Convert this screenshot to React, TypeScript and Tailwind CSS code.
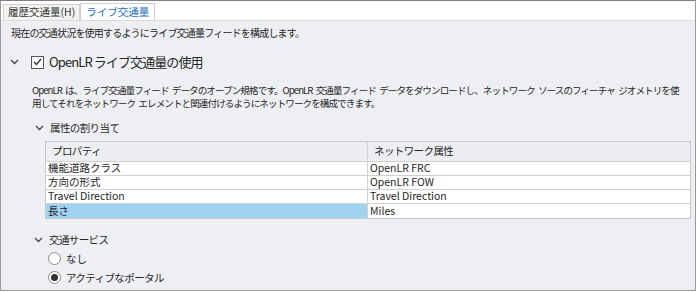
const jp = "font-['Noto_Sans_CJK_JP','Noto_Sans',sans-serif]";

const rows = [
  { prop: "機能道路クラス", attr: "OpenLR FRC" },
  { prop: "方向の形式", attr: "OpenLR FOW" },
  { prop: "Travel Direction", attr: "Travel Direction" },
  { prop: "長さ", attr: "Miles", selected: true },
];

const Chevron = ({ className = "" }: { className?: string }) => (
  <svg width="9" height="6" viewBox="0 0 9 6" className={className}>
    <path d="M1 1 L4.5 4.5 L8 1" fill="none" stroke="#444" strokeWidth="1.3" />
  </svg>
);

const Radio = ({ checked }: { checked?: boolean }) => (
  <span className="flex h-[13px] w-[13px] items-center justify-center rounded-full border border-[#8a8a8a] bg-white">
    {checked && <span className="h-[7px] w-[7px] rounded-full bg-[#333]" />}
  </span>
);

export default function App() {
  return (
    <div className={`h-[292px] w-[697px] bg-white ${jp} text-[#262626]`}>
      <div className="flex h-[291px] w-[696px] flex-col border border-[#9a9a9a] border-t-[#808080]">
        <div className="flex h-[20px] items-end border-b border-[#d9d9d9] bg-white pl-[2px]">
          <div className="flex h-[16px] items-center border border-b-0 border-[#cfcfcf] bg-[#f3f3f3] px-[4px] text-[10.5px] leading-none text-[#333]">
            履歴交通量(H)
          </div>
          <div className="flex h-[17px] items-center border border-b-0 border-[#cfcfcf] bg-white px-[5px] text-[10.5px] leading-none text-[#1a6fc0]">
            ライブ交通量
          </div>
        </div>

        <div className="flex flex-1 flex-col bg-[#eeeff2] pr-[3px]">
          <p className="pl-[10px] pt-[5px] text-[10px] leading-[14px] tracking-[-0.8px]">
            現在の交通状況を使用するようにライブ交通量フィードを構成します。
          </p>

          <div className="mt-[14px] flex items-center pl-[9px]">
            <Chevron />
            <span className="ml-[12px] flex h-[13px] w-[13px] items-center justify-center border border-[#555] bg-white">
              <svg width="9" height="8" viewBox="0 0 9 8">
                <path d="M1 4 L3.5 6.5 L8 1" fill="none" stroke="#333" strokeWidth="1.3" />
              </svg>
            </span>
            <span className="ml-[5px] text-[13px] leading-[16px] tracking-[-0.9px]">OpenLR ライブ交通量の使用</span>
          </div>

          <p className="mt-[14px] whitespace-nowrap pl-[31px] text-[9.6px] leading-[13px] tracking-[-0.95px] [word-spacing:2px]">
            OpenLR は、ライブ交通量フィード データのオープン規格です。OpenLR 交通量フィード データをダウンロードし、ネットワーク ソースのフィーチャ ジオメトリを使
            <br />
            用してそれをネットワーク エレメントと関連付けるようにネットワークを構成できます。
          </p>

          <div className="mt-[11px] flex items-center pl-[34px]">
            <Chevron />
            <span className="ml-[6px] text-[10.5px] leading-[14px] tracking-[-0.6px]">属性の割り当て</span>
          </div>

          <div className="ml-[44px] mr-[1px] mt-[6px] border border-[#c8c8c8] bg-white text-[10.5px] leading-none">
            <div className="grid h-[20px] grid-cols-[322px_1fr] bg-[#eceef1]">
              <div className="flex items-center border-r border-b border-[#d0d0d0] pl-[6px] tracking-[-0.6px]">プロパティ</div>
              <div className="flex items-center border-b border-[#d0d0d0] pl-[6px] tracking-[-0.6px]">ネットワーク属性</div>
            </div>
            {rows.map((r, i) => (
              <div
                key={r.prop}
                className={`grid h-[14px] grid-cols-[322px_1fr] ${i < rows.length - 1 ? "border-b border-[#d0d0d0]" : ""}`}
              >
                <div className={`flex items-center border-r border-[#d0d0d0] pl-[2px] ${r.selected ? "bg-[#9fd3f0]" : ""}`}>
                  {r.prop}
                </div>
                <div className="flex items-center pl-[2px]">{r.attr}</div>
              </div>
            ))}
          </div>

          <div className="mt-[14px] flex items-center pl-[33px]">
            <Chevron />
            <span className="ml-[6px] text-[10.5px] leading-[14px] tracking-[-0.6px]">交通サービス</span>
          </div>

          <div className="mt-[5px] flex flex-col gap-[6px] pl-[47px] text-[10.5px] leading-[13px]">
            <label className="flex items-center gap-[5px]">
              <Radio />
              なし
            </label>
            <label className="flex items-center gap-[5px] tracking-[-0.6px]">
              <Radio checked />
              アクティブなポータル
            </label>
          </div>
        </div>
      </div>
    </div>
  );
}
